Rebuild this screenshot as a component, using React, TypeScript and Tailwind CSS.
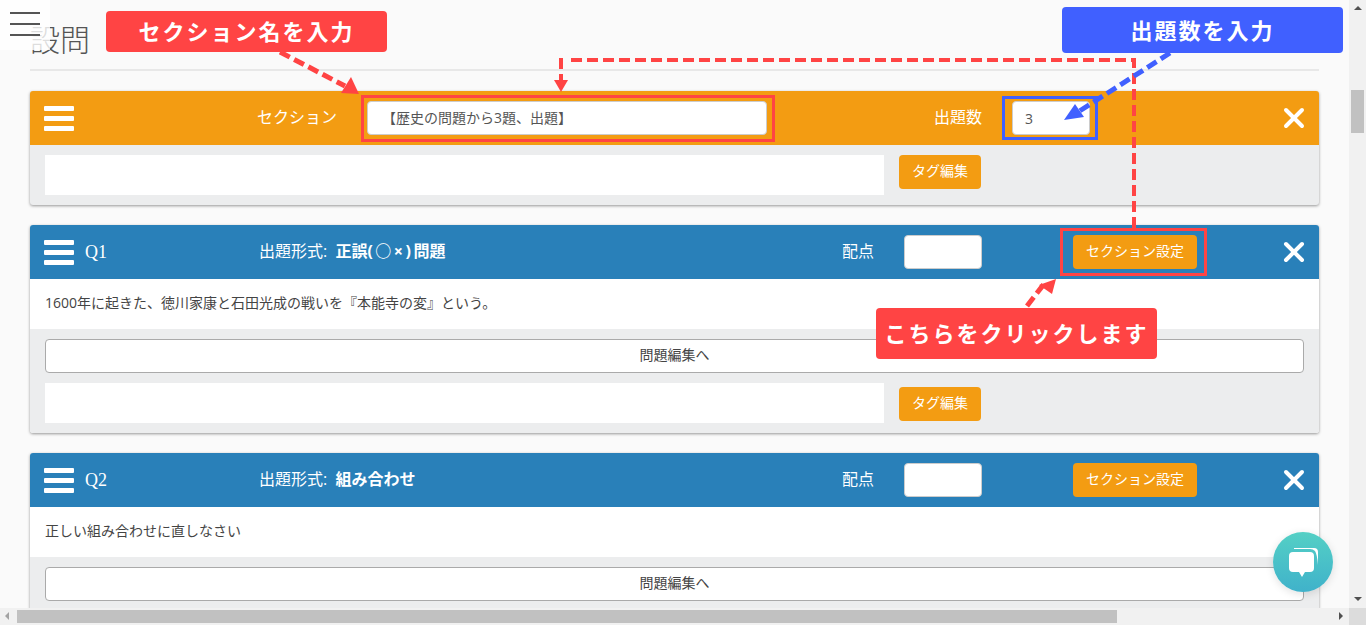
import type { ReactNode } from 'react'
import { X } from 'lucide-react'

const font = "[font-family:'Open_Sans','Noto_Sans_CJK_JP',sans-serif]"

function Burger() {
  return (
    <div className="flex w-[30px] flex-col gap-[5px]">
      <div className="h-[5px] rounded-[1px] bg-white" />
      <div className="h-[5px] rounded-[1px] bg-white" />
      <div className="h-[5px] rounded-[1px] bg-white" />
    </div>
  )
}

function OrangeButton({ label }: { label: string }) {
  return (
    <button className="flex h-[34px] w-full items-center justify-center rounded-[4px] bg-[#f39c12] pb-[3px] text-[14px] text-white">
      {label}
    </button>
  )
}

function TagRow({ center }: { center?: boolean }) {
  return (
    <div className="flex items-start gap-[15px]">
      <div className="h-[40px] w-[839px] bg-white" />
      <div className={center ? 'w-[82px] pt-[4px]' : 'w-[82px]'}>
        <OrangeButton label="タグ編集" />
      </div>
    </div>
  )
}

function Close() {
  return <X className="ml-auto mr-[9px] h-[32px] w-[32px] text-white" strokeWidth={3} />
}

function QuestionCard({ no, type, text, tags }: { no: string; type: ReactNode; text: string; tags?: boolean }) {
  return (
    <section className="mb-[20px] rounded-[3px] bg-white shadow-[0_1px_3px_rgba(0,0,0,0.4)]">
      <header className="flex h-[54px] items-center rounded-t-[3px] bg-[#2980b9] pl-[14px] text-white">
        <Burger />
        <div className="w-[185px] pl-[11px] font-['Liberation_Serif',serif] text-[18px]">{no}</div>
        <div className="w-[583px] pb-[3px] text-[16px] leading-[24px]">
          出題形式: <b className="ml-[4px]">{type}</b>
        </div>
        <div className="w-[62px] pb-[3px] text-[16px] leading-[24px]">配点</div>
        <div className="h-[34px] w-[78px] rounded-[4px] border border-[#ccc] bg-white" />
        <div className="ml-[91px] w-[124px]">
          <OrangeButton label="セクション設定" />
        </div>
        <Close />
      </header>
      <div className="flex h-[50px] items-center px-[15px] pb-[3px] text-[14px] text-[#444]">{text}</div>
      <div className="flex flex-col gap-[10px] rounded-b-[3px] bg-[#ecedee] px-[15px] py-[10px]">
        <button className="flex h-[34px] w-[1259px] items-center justify-center rounded-[4px] border border-[#aaa] bg-white pb-[3px] text-[14px] text-[#444]">
          問題編集へ
        </button>
        {tags && <TagRow center />}
      </div>
    </section>
  )
}

function SectionCard() {
  return (
    <section className="mb-[20px] rounded-[3px] bg-[#ecedee] shadow-[0_1px_3px_rgba(0,0,0,0.4)]">
      <header className="flex h-[54px] items-center rounded-t-[3px] bg-[#f39c12] pl-[14px] text-white">
        <Burger />
        <div className="w-[293px] pb-[3px] pl-[183px] text-[16px] leading-[24px]">セクション</div>
        <div className="flex h-[34px] w-[400px] items-center rounded-[4px] border border-[#ccc] bg-white pb-[2px] pl-[14px] text-[14px] text-[#555]">
          【歴史の問題から3題、出題】
        </div>
        <div className="ml-[167px] w-[78px] pb-[3px] text-[16px] leading-[24px]">出題数</div>
        <div className="flex h-[34px] w-[78px] items-center rounded-[4px] border border-[#ccc] bg-white pl-[12px] text-[14px] text-[#555]">
          3
        </div>
        <Close />
      </header>
      <div className="px-[15px] py-[10px]">
        <TagRow />
      </div>
    </section>
  )
}

function Callout({ className, label }: { className: string; label: string }) {
  return (
    <div className={`absolute flex items-center justify-center rounded-[4px] text-[22px] font-bold tracking-[2px] text-white ${className}`}>
      {label}
    </div>
  )
}

function Arrows() {
  return (
    <svg className="absolute left-0 top-0 h-[625px] w-[1366px]" viewBox="0 0 1366 625" fill="none">
      <g stroke="#ff4444" strokeDasharray="11 5">
        <path d="M280 52 L345 86" strokeWidth="5" />
        <path d="M1134 228 V60 H567" strokeWidth="4" />
        <path d="M561 58 V84" strokeWidth="4" />
        <path d="M1027 306 L1044 284" strokeWidth="5" />
      </g>
      <path d="M359 94 L341 93 L351 77 Z" fill="#ff4444" />
      <path d="M561 92 L554 80 H568 Z" fill="#ff4444" />
      <path d="M1056 279 L1052 294 L1039 285 Z" fill="#ff4444" />
      <path d="M1170 53 L1078 112" stroke="#4060ff" strokeWidth="5" strokeDasharray="11 5" />
      <path d="M1064 120 L1075 104 L1084 117 Z" fill="#4060ff" />
    </svg>
  )
}

function ChatBubble() {
  return (
    <div className="absolute left-[1273px] top-[532px] flex h-[60px] w-[60px] items-center justify-center rounded-full bg-gradient-to-b from-[#54d0c5] to-[#40b2ca] shadow-[0_2px_8px_rgba(0,0,0,0.12)]">
      <svg width="32" height="32" viewBox="0 0 32 32" fill="none">
        <path d="M7 2 H27 Q31 2 31 6 V19 Q30 8 28 5 Q26 3 23 3 L7 3 Z" fill="#fff" />
        <path d="M6 6 H23 Q27 6 27 10 V22 Q27 26 23 26 H18 L15 31 L12 26 H6 Q2 26 2 22 V10 Q2 6 6 6 Z" fill="#fff" />
      </svg>
    </div>
  )
}

function Triangle({ className }: { className: string }) {
  return <div className={`absolute h-0 w-0 border-solid border-transparent ${className}`} />
}

export default function App() {
  return (
    <div className={`relative h-[625px] w-[1366px] overflow-hidden bg-[#f1f1f1] ${font}`}>
      <div className="flex">
        <main className="h-[608px] w-[1349px] overflow-hidden bg-[#fafafa] px-[30px]">
          <h1 className="h-[71px] w-[1289px] border-b-2 border-[#e8e8e8] pt-[21px] text-[30px] font-light leading-[38px] text-[#555]">設問</h1>
          <div className="w-[1289px] pt-[20px]">
            <SectionCard />
            <QuestionCard
              no="Q1"
              type={<>正誤<span className="tracking-[2.5px]">(○×)</span>問題</>}
              text="1600年に起きた、徳川家康と石田光成の戦いを『本能寺の変』という。"
              tags
            />
            <QuestionCard no="Q2" type="組み合わせ" text="正しい組み合わせに直しなさい" />
          </div>
        </main>
        {/* vertical scrollbar */}
        <div className="relative h-[608px] w-[17px] bg-[#f1f1f1]">
          <div className="absolute left-[2px] top-[90px] h-[43px] w-[13px] bg-[#c1c1c1]" />
        </div>
      </div>
      {/* horizontal scrollbar */}
      <div className="flex h-[17px]">
        <div className="relative h-[17px] w-[1349px] bg-[#f1f1f1]">
          <div className="absolute left-[17px] top-[2px] h-[13px] w-[1100px] bg-[#c1c1c1]" />
        </div>
        <div className="h-[17px] w-[17px] bg-[#dcdcdc]" />
      </div>
      <Triangle className="left-[1354px] top-[6px] border-x-[4px] border-b-[4px] border-b-[#505050]" />
      <Triangle className="left-[1354px] top-[597px] border-x-[4px] border-t-[4px] border-t-[#505050]" />
      <Triangle className="left-[5px] top-[612px] border-y-[4px] border-r-[4px] border-r-[#a3a3a3]" />
      <Triangle className="left-[1339px] top-[612px] border-y-[4px] border-l-[4px] border-l-[#505050]" />

      {/* page menu button */}
      <div className="absolute left-0 top-0 flex h-[50px] w-[50px] flex-col gap-[9px] bg-white/80 px-[10px] pt-[12px]">
        <div className="h-[2px] bg-[#555]" />
        <div className="h-[2px] bg-[#555]" />
        <div className="h-[2px] bg-[#555]" />
      </div>

      {/* tutorial annotations */}
      <Arrows />
      <div className="absolute left-[361px] top-[95px] h-[47px] w-[414px] border-[3px] border-[#ff4444]" />
      <div className="absolute left-[1002px] top-[96px] h-[44px] w-[96px] border-[3px] border-[#4060ff]" />
      <div className="absolute left-[1060px] top-[228px] h-[48px] w-[147px] border-[3px] border-[#ff4444]" />
      <Callout className="left-[106px] top-[11px] h-[41px] w-[281px] bg-[#ff4444]" label="セクション名を入力" />
      <Callout className="left-[1062px] top-[7px] h-[46px] w-[281px] bg-[#4060ff]" label="出題数を入力" />
      <Callout className="left-[876px] top-[308px] h-[51px] w-[281px] bg-[#ff4444]" label="こちらをクリックします" />
      <ChatBubble />
    </div>
  )
}
